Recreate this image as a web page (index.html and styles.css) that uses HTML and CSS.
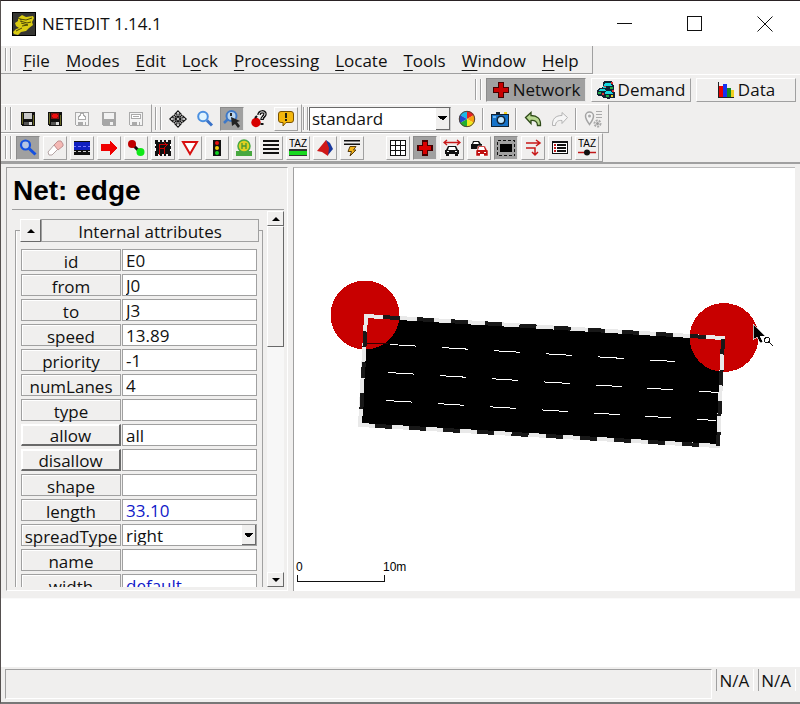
FILE: index.html
```html
<!DOCTYPE html>
<html lang="en">
<head>
<meta charset="utf-8">
<title>NETEDIT 1.14.1</title>
<link rel="stylesheet" href="styles.css">
</head>
<body>
<header class="titlebar">
  <svg class="logo" viewBox="0 0 24 24" aria-hidden="true">
    <path fill="#000" d="M0 0h24v24H0z"/><path fill="#363632" d="M1 1h22v22H1z"/>
    <path class="soft" fill="#d9cb12" d="M6 6l4-3 4 2 7-1 1 2-2 4 1 3-4 3-3 3-5 1-3 3-4-1-1-2 3-3 3-1-3-2-1-3 3-2z"/>
    <path class="soft" fill="none" stroke="#4a4608" d="M8 7l6 1 6-2M8 9l7 2 4-1M10 14l6-1M4 19l6-3M9 11l7 2M6 6l4 2"/>
  </svg>
  <h1 class="title">NETEDIT 1.14.1</h1>
  <div class="winbtns">
    <button aria-label="Minimize"><svg viewBox="0 0 16 16"><path d="M0 7.500h15"/></svg></button>
    <button aria-label="Maximize"><svg viewBox="0 0 16 16"><path d="M.5.5h14v14H.5z"/></svg></button>
    <button aria-label="Close"><svg class="smooth" viewBox="0 0 16 16"><path d="M.5.5l15 15M15.500.5l-15 15"/></svg></button>
  </div>
</header>

<nav class="menubar">
  <span class="grip"></span>
  <button><u>F</u>ile</button><button><u>M</u>odes</button><button><u>E</u>dit</button><button>L<u>o</u>ck</button><button><u>P</u>rocessing</button><button><u>L</u>ocate</button><button><u>T</u>ools</button><button><u>W</u>indow</button><button><u>H</u>elp</button>
</nav>

<div class="supermodes">
  <span class="grip"></span>
  <button class="super pressed"><svg viewBox="0 0 18 18"><path fill="#400" d="M6 1h6v5h5v6h-5v5H6v-5H1V6h5z"/><path fill="#c80000" d="M7 2h4v5h5v4h-5v5H7v-5H2V7h5z"/></svg>Network</button>
  <button class="super"><svg viewBox="0 0 18 18"><path fill="#123" d="M7 0h8l1 4h1v5l1 3v5h-4l-3 1-2-1H6l-1-2H1l-1-2V9l3-2 3-1V3z"/><path fill="#18d8e0" d="M8 2h6l1 3H7zM3 8h5l1 2H2zM9 10h5l2 3H8zM6 5h3v2H6z"/><path fill="#d33" d="M14 1h2v2h-2zM7 5h2v1H7zM15 9h2v2h-2zM5 12h2v2H5z"/><path fill="#2a4" d="M1 11h3v2H1zM9 14h3v2H9zM13 6h3v2h-3z"/><path fill="#e8d020" d="M14 14h2v2h-2z"/></svg>Demand</button>
  <button class="super"><svg viewBox="0 0 18 18"><path fill="#222" d="M1 1h1v16H1z"/><path fill="#e80000" d="M2 5h4v12H2z"/><path fill="#1432f0" d="M6 3h4v14H6z"/><path fill="#158a20" d="M10 7h4v10h-4z"/><path fill="#f0d020" d="M14 9h3v7h-3z"/><path fill="#222" d="M1 16h16v1H1z"/></svg>Data</button>
</div>

<div class="toolrow">
  <div class="toolbar">
    <span class="grip"></span>
    <button class="tool" aria-label="Save"><svg viewBox="0 0 18 18"><path fill="#111" d="M2 2h14v14H3l-1-1z"/><path fill="#6b6b28" d="M3 3h1v11H3zM14 5h1v10h-1z"/><path fill="#c8c8c8" d="M5 3h8v6H5z"/><path fill="#ddd" d="M10 12h3v3h-3z"/><path fill="#555" d="M5 12h5v3H5z"/></svg></button>
    <button class="tool" aria-label="Save network"><svg viewBox="0 0 18 18"><path fill="#111" d="M2 2h14v14H3l-1-1z"/><path fill="#6b6b28" d="M3 3h1v11H3zM14 5h1v10h-1z"/><path fill="#811" d="M5 3h8v6H5z"/><path fill="#f01010" d="M7 4h4v4H7zM6 5h6v2H6z"/><path fill="#ddd" d="M10 12h3v3h-3z"/><path fill="#555" d="M5 12h5v3H5z"/></svg></button>
    <button class="tool" aria-label="Save additionals" disabled><svg viewBox="0 0 18 18"><path fill="#f4f4f4" stroke="#aaa" d="M2.500 2.500h13v13h-12l-1-1z"/><path fill="#fff" stroke="#aaa" d="M5.500 9.500v-3l2-1v-2h3v2l2 1v3z"/><path fill="#aaa" d="M5 12h5v3H5zM12 12h1v3h-1z"/></svg></button>
    <button class="tool" aria-label="Save demand" disabled><svg viewBox="0 0 18 18"><path fill="#a6a6a6" d="M2 2h14v14H3l-1-1z"/><path fill="#f2f2f2" d="M4 3h10v6H4zM10 12h3v3h-3z"/></svg></button>
    <button class="tool" aria-label="Save data" disabled><svg viewBox="0 0 18 18"><path fill="#f4f4f4" stroke="#aaa" d="M2.500 2.500h13v13h-12l-1-1z"/><path fill="#fff" stroke="#aaa" d="M4.500 4.500h9v4h-9z"/><path fill="#aaa" d="M6 6h6v1H6zM5 12h5v3H5zM12 12h1v3h-1z"/></svg></button>
  </div>
  <div class="toolbar">
    <span class="grip"></span>
    <button class="tool" aria-label="Recenter view"><svg class="smooth" viewBox="0 0 18 18"><g fill="#fff" stroke="#111" stroke-width="1.100"><path d="M5 5l2.500 2.500M13 5l-2.500 2.500M5 13l2.500-2.500M13 13l-2.500-2.500"/><path d="M9 .8L12 4h-2v2.500H8V4H6zM9 17.200L6 14h2v-2.500h2V14h2zM.8 9L4 6v2h2.500v2H4v2zM17.200 9L14 12v-2h-2.500V8H14V6z"/><circle cx="9" cy="9" r="1.500"/></g></svg></button>
    <button class="tool" aria-label="Zoom"><svg class="smooth" viewBox="0 0 18 18"><circle cx="7" cy="6.500" r="4.800" fill="#dff4ff" stroke="#4a8fe0" stroke-width="2"/><path stroke="#3a73c8" stroke-width="3" d="M11 10.500l5 5"/></svg></button>
    <button class="tool pressed" aria-label="Zoom style"><svg class="smooth" viewBox="0 0 18 18"><circle cx="8.500" cy="6" r="5" fill="#b8d4ee" stroke="#3d78c8" stroke-width="2"/><path stroke="#3d78c8" stroke-width="2.500" d="M5 9l-4 4"/><path fill="#222" d="M7 3h2v3H7zM8 7l9 4-3 1 3 4-2 2-3-4-3 2z"/></svg></button>
    <button class="tool" aria-label="What's this"><svg class="smooth" viewBox="0 0 18 18"><circle cx="6" cy="12.500" r="4.700" fill="#d80000"/><path fill="none" stroke="#111" stroke-width="3.500" d="M9 5c0-4 6-4 6-1 0 2-3 3-3 6"/><path fill="none" stroke="#fff" d="M9 5c0-4 6-4 6-1 0 2-3 3-3 5"/><path stroke="#111" stroke-width="2" d="M5 8l2-2M10.500 14h3"/></svg></button>
    <button class="tool raised" aria-label="Messages"><svg class="smooth" viewBox="0 0 18 18"><path fill="#f4b70c" stroke="#7a5200" d="M4 1.500h10q2.500 0 2.500 2.500v6q0 2.500-2.500 2.500H9L6 16v-3.500H4Q1.500 12.500 1.500 10V4Q1.500 1.500 4 1.500z"/><path fill="#221" d="M8 3h2v5H8zM8 9h2v2H8z"/></svg></button>
  </div>
  <div class="toolbar tight">
    <span class="grip"></span>
    <select class="scheme" aria-label="Coloring scheme"><option>standard</option></select>
    <button class="tool" aria-label="Edit coloring"><svg class="smooth" viewBox="0 0 18 18"><path fill="#18b8e8" d="M9 9V1A8 8 0 0 0 2 5z"/><path fill="#e82020" d="M9 9V1A8 8 0 0 1 16 5z"/><path fill="#f8a010" d="M9 9l7-4a8 8 0 0 1 0 8z"/><path fill="#f2e81c" d="M9 9l7 4a8 8 0 0 1-7 4z"/><path fill="#20b030" d="M9 9v8a8 8 0 0 1-7-4z"/><path fill="#2048d0" d="M9 9l-7 4a8 8 0 0 1 0-8z"/><circle cx="9" cy="9" r="7.700" fill="none" stroke="#543"/></svg></button>
    <span class="sep"></span>
    <button class="tool" aria-label="Snapshot"><svg viewBox="0 0 18 18"><path fill="#123" d="M0 4h5V2h4v2h9v13H0z"/><path fill="#1673c9" d="M1 5h16v11H1z"/><path fill="#6bb4ee" d="M2 6h3v2H2z"/><g class="soft"><circle cx="10" cy="10" r="4.500" fill="#123"/><circle cx="10" cy="10" r="3" fill="#bfe6ff"/></g><path fill="#f0d020" d="M13 2h3v2h-3z"/></svg></button>
    <span class="sep"></span>
    <button class="tool" aria-label="Undo"><svg class="smooth" viewBox="0 0 18 18"><path fill="#b8d890" stroke="#2e4a18" stroke-width="1.300" d="M1.500 7.500L7 2.500v3c6 0 10 3 9.500 10h-3c0-4-3-5.500-6.500-5v3z"/></svg></button>
    <button class="tool" aria-label="Redo" disabled><svg class="smooth" viewBox="0 0 18 18"><path fill="#f6f6f6" stroke="#b4b4b4" d="M16.500 7.500L11 2.500v3c-6 0-10 3-9.500 10h3c0-4 3-5.500 6.500-5v3z"/></svg></button>
    <span class="sep"></span>
    <button class="tool" aria-label="Compute path" disabled><svg class="smooth" viewBox="0 0 18 18"><path fill="#f4f4f4" stroke="#a4a4a4" stroke-width="1.500" d="M5.500 14.500C3 11 1.500 9 1.500 6a4 4 0 0 1 8 0c0 3-1.500 5-4 8.500z"/><circle cx="5.500" cy="6" r="1.500" fill="#aaa"/><path stroke="#aaa" d="M12 1.500h6M12 4.500h6M12 7.500h6"/><circle cx="13.500" cy="13.500" r="3" fill="none" stroke="#aaa" stroke-width="2" stroke-dasharray="2 1"/><circle cx="13.500" cy="13.500" r="1.500" fill="#999"/></svg></button>
  </div>
</div>

<div class="toolrow">
  <div class="toolbar">
    <span class="grip"></span>
    <button class="tool pressed" aria-label="Inspect"><svg class="smooth" viewBox="0 0 18 18"><circle cx="6.500" cy="6" r="4.500" fill="#b4c4e4" stroke="#1450e0" stroke-width="2.200"/><path stroke="#1450e0" stroke-width="3" d="M10 9.500l6.500 6"/></svg></button>
    <button class="tool raised" aria-label="Delete"><svg class="smooth" viewBox="0 0 18 18"><path fill="#fff" stroke="#b4a4a4" d="M2 13l6-7 4 4-6 6H3z"/><path fill="#f4b8b4" stroke="#c09090" d="M8 6l4-4h3l2 3v2l-5 4z"/></svg></button>
    <button class="tool raised" aria-label="Select"><svg viewBox="0 0 18 18"><path fill="#111" d="M1 2h16v14H1z"/><path fill="#1020c0" d="M1 3h16v8H1z"/><path fill="#77f" d="M1 7h2v1H1zM5 7h3v1H5zM10 7h3v1h-3zM15 7h2v1h-2z"/><path fill="#ccc" d="M1 12h2v1H1zM5 12h3v1H5zM10 12h3v1h-3zM15 12h2v1h-2z"/></svg></button>
    <button class="tool raised" aria-label="Move"><svg viewBox="0 0 18 18"><path fill="#f00000" d="M1 5h9V2l7 7-7 7v-4H1z"/></svg></button>
    <button class="tool raised" aria-label="Create edge"><svg class="smooth" viewBox="0 0 18 18"><path stroke="#111" stroke-width="3" d="M6 6l6 6"/><circle cx="5" cy="5" r="4" fill="#c00000"/><circle cx="13.500" cy="13" r="4" fill="#10e818"/></svg></button>
    <button class="tool raised" aria-label="Connections"><svg viewBox="0 0 18 18"><path fill="#111" d="M1 1h3v2h2V1h2v2h2V1h2v2h2V1h3v16h-3v-2h-2v2h-2v-2H8v2H6v-2H4v2H1z"/><path fill="#fff" d="M1 5h1v2H1zM1 9h1v3H1zM16 5h1v2h-1zM16 10h1v2h-1z"/><path fill="none" stroke="#c80000" d="M5.500 16V5.500H14M5.500 9.500H10v5M10 3l3 3-3 3"/></svg></button>
    <button class="tool raised" aria-label="Prohibitions"><svg class="smooth" viewBox="0 0 18 18"><path fill="#fff" stroke="#d81010" stroke-width="2" d="M2 3h14L9 15z"/></svg></button>
    <button class="tool raised" aria-label="Traffic lights"><svg class="smooth" viewBox="0 0 18 18"><path fill="#111" d="M5 1h8v16H5z"/><circle cx="9" cy="4" r="2" fill="#e81010"/><circle cx="9" cy="9" r="2" fill="#f0d010"/><circle cx="9" cy="14" r="2" fill="#10d020"/></svg></button>
    <button class="tool raised" aria-label="Additionals"><svg class="smooth" viewBox="0 0 18 18"><path fill="#48a840" d="M1 12h3l3-2h5l2 2h3v5H1z"/><circle cx="9" cy="7" r="6" fill="#e0d020" stroke="#48a840" stroke-width="1.500"/><path fill="none" stroke="#489830" stroke-width="1.300" d="M7 4v6M11 4v6M7 7h4"/></svg></button>
    <button class="tool raised" aria-label="Crossings"><svg viewBox="0 0 18 18"><path fill="#111" d="M1 1h16v2H1zM1 5h16v2H1zM1 9h16v2H1zM1 13h16v2H1z"/></svg></button>
    <button class="tool raised" aria-label="TAZ"><svg class="smooth" viewBox="0 0 18 18"><text class="taz" x="9" y="8">TAZ</text><path fill="#333" d="M0 10h18v7H0z"/><path fill="#18d820" d="M0 12h18v4H0z"/></svg></button>
    <button class="tool raised" aria-label="Shapes"><svg class="smooth" viewBox="0 0 18 18"><path fill="#18389c" d="M10 1l4 3 3 6-5 6z"/><path fill="#d01818" d="M10 1L1 12l5 1 6 4 1-8z"/></svg></button>
    <button class="tool raised" aria-label="Wires"><svg class="smooth" viewBox="0 0 18 18"><path fill="#111" d="M1 1h16v1.500H1zM1 4.500h16V6H1z"/><path fill="#f4b418" stroke="#5a3c08" d="M7 7.500h6L10.500 11H13l-6 6 1.500-4.500H5z"/></svg></button>
    <span class="space"></span>
    <button class="tool raised" aria-label="Grid"><svg viewBox="0 0 18 18"><path fill="#fff" stroke="#111" d="M1.500 1.500h15v15h-15zM6.500 1.500v15M11.500 1.500v15M1.500 6.500h15M1.500 11.500h15"/></svg></button>
    <button class="tool pressed" aria-label="Draw junction shape"><svg viewBox="0 0 18 18"><path fill="#400" d="M6 1h6v5h5v6h-5v5H6v-5H1V6h5z"/><path fill="#d80000" d="M7 3h4v4h4v4h-4v4H7v-4H3V7h4z"/></svg></button>
    <button class="tool raised" aria-label="Spread vehicles"><svg class="smooth" viewBox="0 0 18 18"><path fill="none" stroke="#c81818" stroke-width="1.300" d="M1 3.500h16M4 1L1 3.500 4 6M14 1l3 2.500L14 6"/><path fill="#111" d="M5 7h8l2 4h1v4h-1v2h-3v-2H6v2H3v-2H2v-4h1z"/><path fill="#fff" d="M6 8h6l1 3H5zM4 12h2v1H4zM12 12h2v1h-2z"/></svg></button>
    <button class="tool raised" aria-label="Show demand"><svg class="smooth" viewBox="0 0 18 18"><path fill="#111" d="M3 2h6l2 3h1v5H1V5h1z"/><path fill="#fff" d="M4 3h4l1 2H3z"/><path fill="#c01010" stroke="#fff" stroke-width=".5" d="M8 7h7l2 4h1v6H6v-6h1z"/><path fill="#fff" d="M9 8h5l1 3H8zM8 13h2v1H8zM14 13h2v1h-2zM10 15h4v2h-4z"/></svg></button>
    <button class="tool pressed" aria-label="Select edges"><svg viewBox="0 0 18 18"><path fill="none" stroke="#111" stroke-dasharray="3 2" d="M.5 1.500h17v15H.5z"/><path fill="#000" d="M3 5h12v8H3z"/></svg></button>
    <button class="tool raised" aria-label="Show connections"><svg class="smooth" viewBox="0 0 18 18"><path fill="none" stroke="#c81818" stroke-width="1.500" d="M2 4h13M12 1l4 3-4 3M2 9h9v7M8 13l3 3 3-3"/></svg></button>
    <button class="tool raised" aria-label="Hide connections"><svg viewBox="0 0 18 18"><path fill="#111" d="M1 2h16v13H1z"/><path fill="#fff" d="M2 4h14v10H2z"/><path fill="#c01818" d="M3 5h2v2H3zM3 8h2v2H3zM3 11h2v2H3z"/><path fill="#111" d="M6 5h9v2H6zM6 8h9v2H6zM6 11h9v2H6z"/></svg></button>
    <button class="tool raised" aria-label="TAZ connectors"><svg class="smooth" viewBox="0 0 18 18"><text class="taz" x="9" y="8">TAZ</text><path stroke="#c01818" stroke-width="1.500" d="M0 13.500h18"/><circle cx="9" cy="13.500" r="3" fill="#111"/></svg></button>
  </div>
</div>

<main class="work">
  <aside class="panel">
    <h2 class="heading">Net: edge</h2>
    <div class="scroller">
      <form class="content">
        <fieldset class="group">
          <legend class="grouphead"><button type="button" class="fold" aria-label="Collapse"><span class="arrow up"></span></button><span class="grouptitle">Internal attributes</span></legend>
          <div class="row"><label class="name" for="a-id">id</label><input class="value" id="a-id" value="E0"></div>
          <div class="row"><label class="name" for="a-from">from</label><input class="value" id="a-from" value="J0"></div>
          <div class="row"><label class="name" for="a-to">to</label><input class="value" id="a-to" value="J3"></div>
          <div class="row"><label class="name" for="a-speed">speed</label><input class="value" id="a-speed" value="13.89"></div>
          <div class="row"><label class="name" for="a-priority">priority</label><input class="value" id="a-priority" value="-1"></div>
          <div class="row"><label class="name" for="a-lanes">numLanes</label><input class="value" id="a-lanes" value="4"></div>
          <div class="row"><label class="name" for="a-type">type</label><input class="value" id="a-type"></div>
          <div class="row"><button type="button" class="name edit" id="b-allow">allow</button><input class="value" aria-labelledby="b-allow" value="all"></div>
          <div class="row"><button type="button" class="name edit" id="b-disallow">disallow</button><input class="value" aria-labelledby="b-disallow"></div>
          <div class="row"><label class="name" for="a-shape">shape</label><input class="value" id="a-shape"></div>
          <div class="row"><label class="name" for="a-length">length</label><input class="value computed" id="a-length" value="33.10"></div>
          <div class="row"><label class="name" for="a-spread">spreadType</label><select class="value" id="a-spread"><option>right</option></select></div>
          <div class="row"><label class="name" for="a-name">name</label><input class="value" id="a-name"></div>
          <div class="row"><label class="name" for="a-width">width</label><input class="value computed" id="a-width" value="default"></div>
        </fieldset>
      </form>
      <div class="scrollbar">
        <button aria-label="Scroll up"><span class="arrow up"></span></button>
        <div class="track"><div class="thumb"></div></div>
        <button aria-label="Scroll down"><span class="arrow down"></span></button>
      </div>
    </div>
  </aside>
  <section class="view" aria-label="Network view">
    <svg class="network" viewBox="294 168 501 422" preserveAspectRatio="xMinYMin meet">
      <path d="M366 316L723 339L718 446L360 424z"/>
      <g class="lanes">
        <path d="M390 344.500L675 361.500"/>
        <path d="M388 372.500L719 392.500"/>
        <path d="M386 400.500L716 420.500"/>
      </g>
      <circle class="junction" cx="365" cy="315" r="34.500"/>
      <circle class="junction" cx="724" cy="337.500" r="34.500"/>
      <path stroke="#300" d="M366 343l22 1"/>
      <g class="outline">
        <path class="light" d="M366 316L723 338L718 446L360 425z"/>
        <path class="dark" stroke-dasharray="17 17.200" stroke-dashoffset="-17" d="M366 316L706 337"/>
        <path class="dark" stroke-dasharray="15.500 15.500" d="M723 339L718 446"/>
        <path class="dark" stroke-dasharray="17 17.200" stroke-dashoffset="-15" d="M360 425L700 445"/>
        <path class="dark" stroke-dasharray="15.500 15.500" stroke-dashoffset="-15.500" d="M366 316L361 418"/>
      </g>
      <path stroke="#fff" stroke-width=".7" d="M753 324v16l4-3 3 6 3-1-3-6h5z"/>
      <g fill="none" stroke="#111"><circle cx="767" cy="340" r="2.500"/><path d="M769 342l4 4"/></g>
      <path class="ruler" d="M297.500 575v6.500h87V575"/>
      <text class="scale" x="296" y="571">0</text><text class="scale" x="383" y="571">10m</text>
    </svg>
  </section>
</main>

<section class="messages" aria-label="Messages"></section>
<footer class="status"><div class="statusline"></div><div class="coord">N/A</div><div class="coord">N/A</div></footer>
</body>
</html>
```
FILE: styles.css
```css
* { box-sizing: border-box; }

:root {
  --face: #f0efee;
  --shadow: #a0a0a0;
  --dark: #696969;
}

body {
  margin: 0;
  height: 100vh;
  display: flex;
  flex-direction: column;
  overflow: hidden;
  background: var(--face);
  border: 1px solid #55504f;
  border-top-color: #2a2224;
  border-right: 0;
  border-bottom: 2px solid #777;
  font: 17px/22px "Open Sans", "Noto Sans", sans-serif;
  color: #111;
}

button, input, select { font: inherit; color: inherit; margin: 0; padding: 0; border-radius: 0; }
button { background: none; border: 0; }
svg { display: block; flex: none; shape-rendering: crispEdges; }
.smooth, .soft { shape-rendering: auto; }

/* Title bar */
.titlebar { flex: none; height: 45px; display: flex; align-items: center; padding-left: 11px; gap: 6px; background: #fff; }
.logo { width: 24px; height: 24px; }
.title { margin: 0; font-size: 17px; font-weight: 400; flex: 1; }
.winbtns { display: flex; }
.winbtns button { width: 70px; height: 44px; display: flex; align-items: center; justify-content: center; }
.winbtns svg { width: 16px; height: 16px; fill: none; stroke: #111; }

/* Menu and toolbars */
.grip { width: 6px; align-self: stretch; margin: 2px 5px 2px 0; border: solid var(--shadow); border-width: 0 1px; box-shadow: inset 1px 0 #fff, 1px 0 #fff; flex: none; }
.menubar { flex: none; align-self: flex-start; height: 28px; display: flex; align-items: center; padding: 2px 5px 0 4px; border: solid var(--shadow); border-width: 0 1px 1px 0; }
.menubar button { padding: 0 8px; height: 24px; }
.menubar u { text-underline-offset: 3px; text-decoration-thickness: 1px; }
.menubar .grip { margin: 0 4px 2px 0; }

.supermodes { flex: none; align-self: flex-end; height: 30px; display: flex; align-items: center; gap: 5px; padding: 2px 4px; border-top: 1px solid #fff; }
.supermodes .grip { margin-right: 0; }
.super { width: 100px; height: 24px; display: flex; align-items: center; justify-content: center; gap: 3px; border: 1px solid; border-color: #fff var(--shadow) var(--shadow) #fff; }
.super svg { width: 18px; height: 18px; }

.toolrow { flex: none; height: 29px; display: flex; }
.toolbar { display: flex; align-items: center; padding-left: 4px; border: solid; border-width: 1px 1px 1px 0; border-color: #fff var(--shadow) var(--shadow) #fff; }
.toolbar + .toolbar { padding-left: 3px; }
.toolbar + .tight { padding-left: 1px; }
.tight .grip { width: 5px; margin-right: 1px; }
.tool { width: 24px; height: 24px; margin-right: 3px; display: flex; align-items: center; justify-content: center; border: 1px solid transparent; flex: none; }
.tool svg { width: 18px; height: 18px; }
.raised { border-color: #fff var(--shadow) var(--shadow) #fff; }
.pressed { background: var(--shadow); border-color: #8c8c8c #e8e8e8 #e8e8e8 #8c8c8c; }
.sep { width: 2px; height: 22px; margin-right: 4px; border-left: 1px solid var(--shadow); border-right: 1px solid #fff; }
.space { width: 19px; }
.taz { font: 10px "Liberation Sans", sans-serif; text-anchor: middle; fill: #000; }

select {
  appearance: none;
  background:
    linear-gradient(to top right, transparent 50%, #000 50%) no-repeat right 7px center / 5px 5px,
    linear-gradient(to top left, transparent 50%, #000 50%) no-repeat right 2px center / 5px 5px,
    linear-gradient(var(--dark), var(--dark)) no-repeat right 0 top 0 / 1px 100%,
    linear-gradient(var(--dark), var(--dark)) no-repeat right 0 bottom 0 / 14px 1px,
    linear-gradient(var(--face), var(--face)) no-repeat right / 14px 100%,
    #fff;
}
.scheme { width: 142px; height: 24px; margin-right: 4px; padding: 0 2px; border: 1px solid; border-color: var(--dark) #ccc #ccc var(--dark); }

/* Work area */
.work { flex: 1; min-height: 0; display: flex; border-top: 2px solid var(--shadow); padding: 3px 5px 7px 5px; gap: 5px; }
.panel { width: 282px; flex: none; display: flex; flex-direction: column; border: 1px solid; border-color: var(--shadow) #fff #fff var(--shadow); padding: 1px 3px 3px 5px; }
.heading { margin: 0; padding: 3px 0 0 1px; font: bold 28px/37px "Liberation Sans", Arial, sans-serif; color: #000; border-bottom: 1px solid var(--shadow); flex: none; }
.scroller { flex: 1; min-height: 0; display: flex; margin-top: 1px; }
.content { flex: 1; min-width: 0; overflow: hidden; padding: 8px 4px 0 3px; }
.group { margin: 0; min-width: 0; border: 1px solid var(--shadow); box-shadow: inset 1px 0 #fff; padding: 7px 5px 4px; }
.grouphead { width: calc(100% + 3px); height: 23px; padding: 0; display: flex; margin: 0 -2px 0 -1px; }
.fold { width: 21px; display: flex; align-items: center; justify-content: center; border: 1px solid; border-color: #fff var(--dark) var(--dark) #fff; }
.grouptitle { flex: 1; text-align: center; border: 1px solid var(--shadow); line-height: 23px; }
.arrow { border: 4px solid transparent; }
.arrow.up { border-top: 0; border-bottom-color: #000; }
.arrow.down { border-bottom: 0; border-top-color: #000; }

.row { display: grid; grid-template-columns: 100px 1fr; gap: 1px; height: 22px; margin-bottom: 3px; }
.name, .value { min-width: 0; width: 100%; height: 22px; border: 1px solid var(--shadow); }
.name { text-align: center; white-space: nowrap; line-height: 23px; box-shadow: inset 1px 1px #fff; }
.edit { border-color: #fff var(--dark) var(--dark) #fff; border-width: 1px 2px 2px 1px; line-height: 22px; }
.value { padding: 0 3px; line-height: 20px; }
input.value { background-color: #fff; }
select.value { line-height: 22px; }
.computed { color: #1018c8; }

.scrollbar { width: 17px; display: flex; flex-direction: column; flex: none; }
.scrollbar button { height: 15px; display: flex; align-items: center; justify-content: center; flex: none; }
.scrollbar button, .thumb { background: var(--face); border: 1px solid; border-color: #fff var(--dark) var(--dark) #fff; }
.track { flex: 1; background: #f7f7f7; }
.thumb { height: 35%; }

.view { flex: 1; min-width: 0; background: #fff; border-left: 1px solid var(--shadow); border-top: 1px solid #bbb; }
.network { width: 100%; height: 100%; }
.lanes { stroke: #fff; stroke-dasharray: 26 26; }
.junction { fill: #c80000; }
.outline { fill: none; stroke-width: 4; }
.light { stroke: #e9e9e9; }
.dark { stroke: #181818; }
.ruler { fill: none; stroke: #111; }
.scale { font: 12px "Liberation Sans", sans-serif; fill: #000; }

.messages { flex: none; height: 69px; background: #fff; border-top: 1px solid #fafafa; }
.status { flex: none; height: 35px; display: flex; gap: 4px; padding: 2px 4px 3px; }
.statusline { flex: 1; border: 1px solid; border-color: var(--shadow) #fff #fff var(--shadow); }
.coord { height: 22px; padding: 0 4px 0 2px; border-left: 1px solid var(--shadow); border-right: 1px solid #fff; line-height: 24px; }
```
